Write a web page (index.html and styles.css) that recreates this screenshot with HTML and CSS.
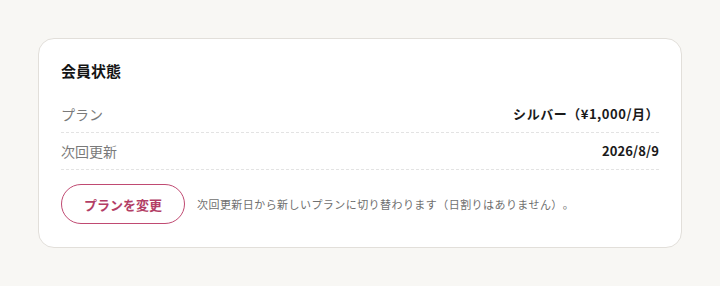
FILE: index.html
```html
<!DOCTYPE html>
<html lang="ja">
<head>
<meta charset="utf-8">
<link rel="stylesheet" href="styles.css">
</head>
<body>
<main class="page">
  <section class="card">
    <h2 class="card-title">会員状態</h2>
    <dl class="rows">
      <div class="row">
        <dt class="label">プラン</dt>
        <dd class="value">シルバー（¥1,000/月）</dd>
      </div>
      <div class="row">
        <dt class="label">次回更新</dt>
        <dd class="value value-num">2026/8/9</dd>
      </div>
    </dl>
    <div class="actions">
      <button class="btn-outline" type="button">プランを変更</button>
      <p class="note">次回更新日から新しいプランに切り替わります（日割りはありません）。</p>
    </div>
  </section>
</main>
</body>
</html>
```

FILE: styles.css
```css
* { box-sizing: border-box; }
html, body {
  margin: 0;
  padding: 0;
  background: #f8f7f4;
  font-family: "Noto Sans CJK JP", "Noto Sans", sans-serif;
  color: #1a1a1a;
  text-spacing-trim: space-all;
}
.page {
  padding: 38px 38px;
}
.card {
  background: #ffffff;
  border: 1px solid #e2dfda;
  border-radius: 16px;
  padding: 22px 22px 22px;
  height: 210px;
}
.card-title {
  margin: 0 0 15px;
  font-size: 15px;
  line-height: 20px;
  font-weight: 700;
  color: #141414;
}
.rows {
  margin: 0;
}
.row {
  display: flex;
  justify-content: space-between;
  align-items: center;
  padding: 9px 0;
  border-bottom: 1px dashed #e3e3e3;
}
.label {
  margin: 0;
  font-size: 14px;
  line-height: 18px;
  color: #7a7a7a;
}
.value {
  margin: 0;
  font-size: 13px;
  line-height: 18px;
  font-weight: 700;
  color: #1a1a1a;
  letter-spacing: 0.04em;
}
.value-num {
  letter-spacing: 0.01em;
}
.actions {
  display: flex;
  align-items: center;
  gap: 12px;
  margin-top: 14px;
}
.btn-outline {
  height: 40px;
  padding: 0 22px;
  border: 1px solid #c04a72;
  border-radius: 20px;
  background: #fff;
  color: #b33e66;
  font-family: inherit;
  font-size: 13px;
  font-weight: 700;
}
.note {
  margin: 0;
  font-size: 11px;
  color: #6f6f6f;
  letter-spacing: 0.04em;
}
```
